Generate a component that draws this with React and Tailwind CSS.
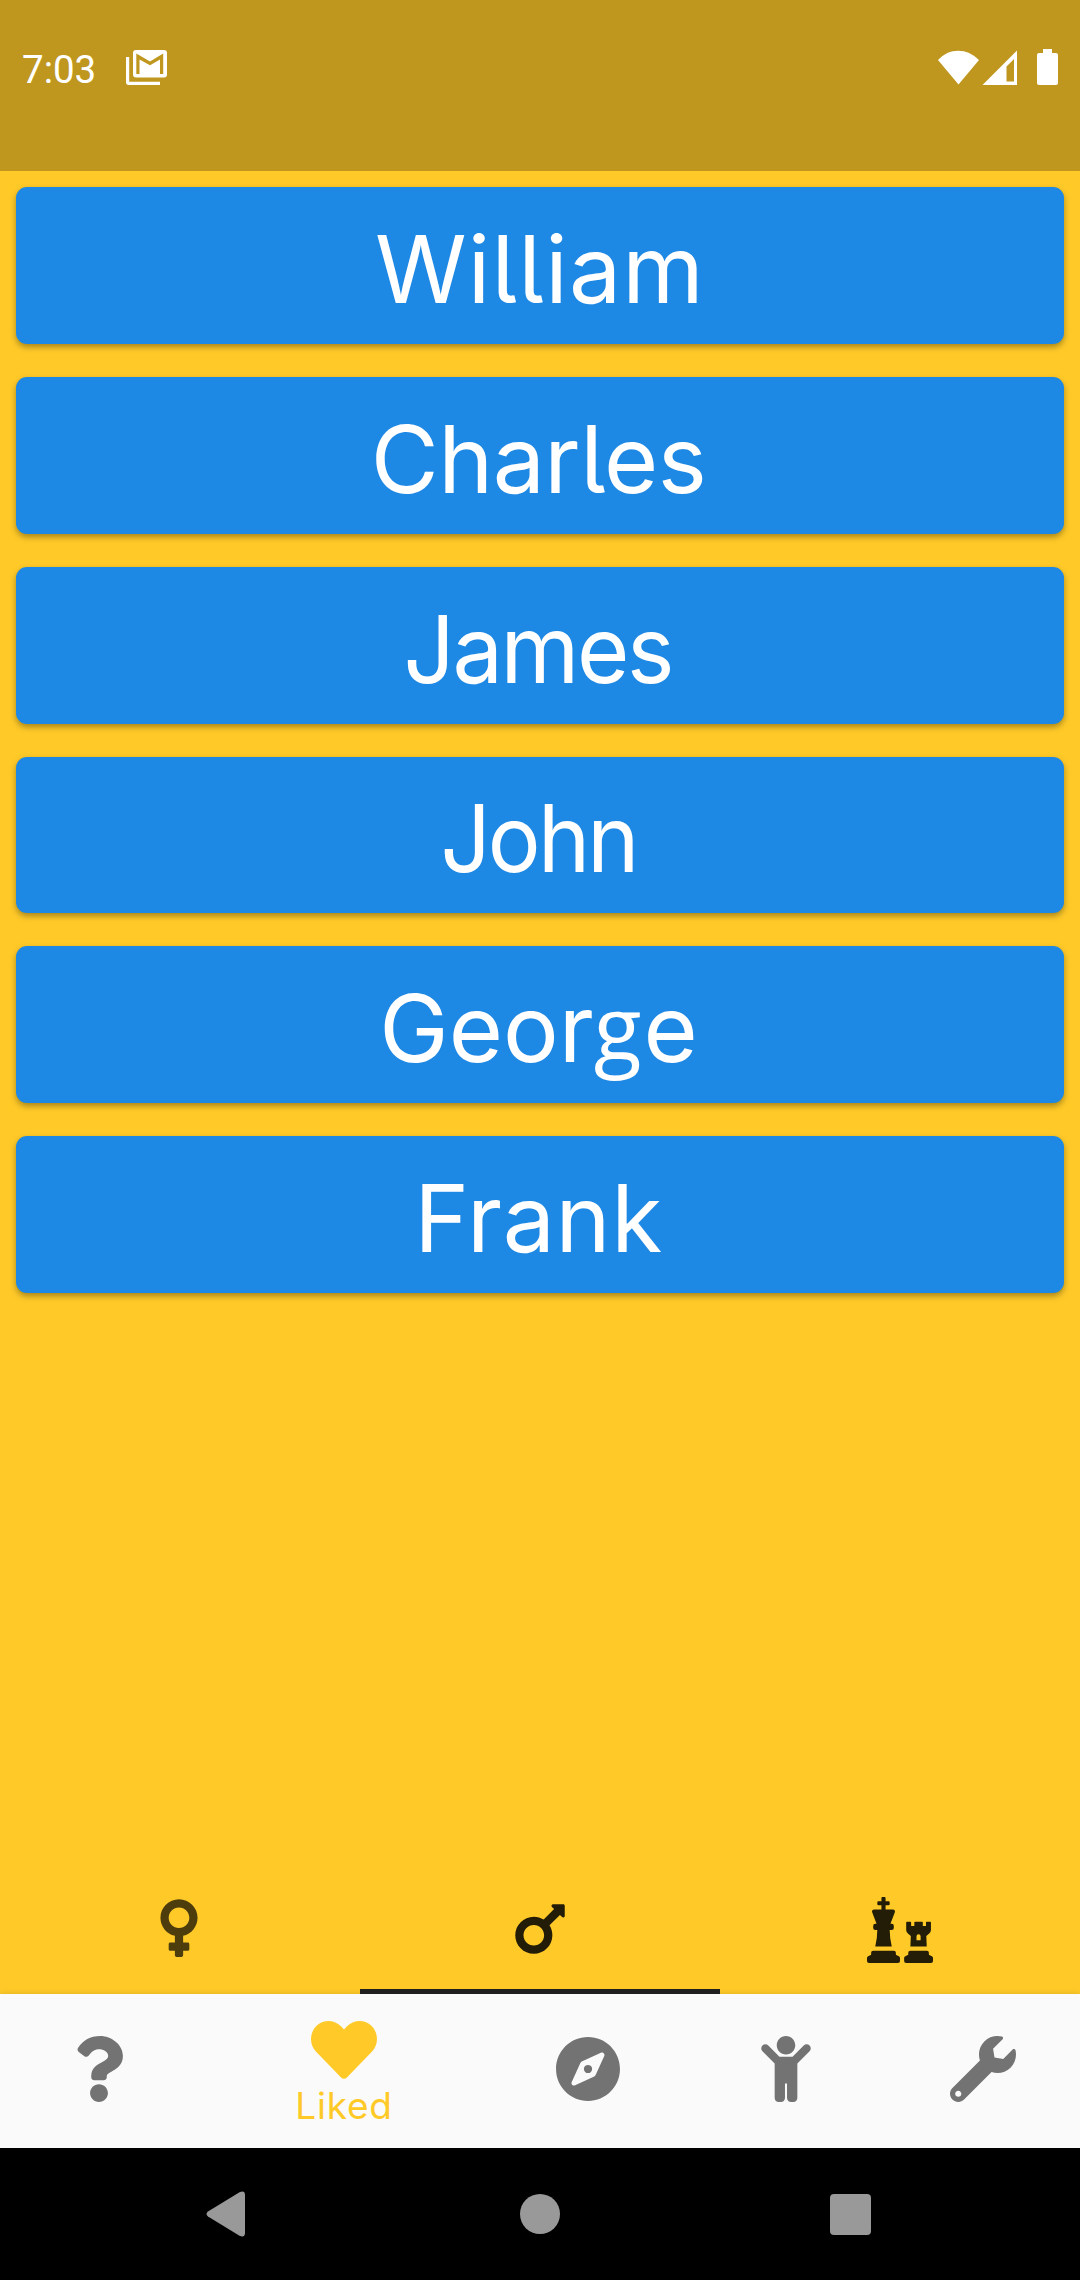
import { FaVenus, FaMars, FaChess, FaQuestion, FaHeart, FaCompass, FaChild, FaWrench } from "react-icons/fa";

const names = [
  { text: "William", cls: "tracking-[1.2px]" },
  { text: "Charles", cls: "tracking-[-0.53px] mr-[3px]" },
  { text: "James", cls: "tracking-[-2.5px] mr-[4px] scale-x-[0.967]" },
  { text: "John", cls: "tracking-[-3px] mr-[4px] scale-x-[0.948]" },
  {
    text: (
      <>
        Geor<span className="align-[2px] font-['Open_Sans',sans-serif] text-[88px] leading-[0] tracking-[2px]">g</span>e
      </>
    ),
    cls: "mr-[3px]",
  },
  { text: "Frank", cls: "tracking-[0.65px] mr-[3px]" },
];

export default function App() {
  return (
    <div className="flex h-[2280px] w-[1080px] flex-col bg-[#ffca28] font-['Inter',sans-serif]">
      <header className="flex h-[171px] items-start justify-between bg-[#bf971e] pl-[22px] pr-[22px] pt-[46px] text-white">
        <div className="flex items-start">
          <span className="mt-px font-['Roboto',sans-serif] text-[38.5px] leading-[46px]">7:03</span>
          <svg className="ml-[30px] mt-1 h-[35px] w-[41px]" viewBox="0 0 41 35" fill="none">
            <path d="M1.500 7v24.500a2 2 0 0 0 2 2H34" stroke="white" strokeWidth="3.4" />
            <path fillRule="evenodd" fill="white" d="M10 0h28a3 3 0 0 1 3 3v21.500a3 3 0 0 1-3 3H10a3 3 0 0 1-3-3V3a3 3 0 0 1 3-3Z M10.300 3.500V24h3.200V9.500L24 15.300L34 9.500V24h3.200V3.500L24 11.500Z" />
          </svg>
        </div>
        <svg className="mt-[3px] h-[36px] w-[121px]" viewBox="0 0 121 36" fill="white">
          <path d="M1 11C12 -1.500 30 -1.500 42 11L21.500 35.500Z" />
          <path fillRule="evenodd" d="M80 1.500V36H45.500Z M77 10L69.500 17.500V32.500H77Z" />
          <path d="M106 0h9v4h4a2 2 0 0 1 2 2v28a2 2 0 0 1-2 2h-17a2 2 0 0 1-2-2V6a2 2 0 0 1 2-2h4Z" />
        </svg>
      </header>
      <main className="flex flex-1 flex-col gap-[33px] px-4 pt-[16.25px]">
        {names.map((n, i) => (
          <div
            key={i}
            className="flex h-[156.75px] shrink-0 items-center justify-center rounded-[11px] bg-[#1e88e5] pt-[8px] text-white shadow-[0_3px_6px_rgba(0,0,0,0.35)]"
          >
            <span className={`block h-[93px] text-[93px] leading-none [font-feature-settings:'cv05'] ${n.cls}`}>{n.text}</span>
          </div>
        ))}
      </main>
      <nav className="grid h-[128px] shrink-0 grid-cols-3 text-[66px] text-[#231c06]">
        <div className="flex justify-center pr-[2px] pt-[29px] text-[#4d3d0c]"><FaVenus /></div>
        <div className="flex justify-center border-b-[5px] border-[#212121] pt-[30px]"><FaMars /></div>
        <div className="flex justify-center pt-[31px]"><FaChess /></div>
      </nav>
      <nav className="flex h-[154px] shrink-0 bg-[#fafafa] text-[66px] text-[#737373] shadow-[0_0_6px_rgba(0,0,0,0.15)]">
        <div className="flex w-[198px] items-center justify-center pb-[4px]"><FaQuestion /></div>
        <div className="flex w-[292px] flex-col items-center pt-[23px] text-[#ffca28]">
          <FaHeart />
          <span className="mt-px text-[37px] leading-[44px] tracking-[0.8px]">Liked</span>
        </div>
        <div className="flex w-[196px] items-center justify-center pb-[4px]"><FaCompass /></div>
        <div className="flex w-[199px] items-center justify-center pb-[4px]"><FaChild /></div>
        <div className="flex w-[195px] items-center justify-center pb-[4px]"><FaWrench /></div>
      </nav>
      <footer className="flex h-[132px] shrink-0 items-center bg-black pl-[206px] text-[#999999]">
        <svg className="h-[46px] w-[39px]" viewBox="0 0 39 46" fill="currentColor">
          <path d="M2 20.500L33.500 1.200Q39 -1 39 4V42Q39 47 33.500 44.800L2 25.500Q-1 23 2 20.500Z" />
        </svg>
        <div className="ml-[275px] size-10 rounded-full bg-[#999999]" />
        <div className="ml-[270px] size-[41px] rounded-[4px] bg-[#999999]" />
      </footer>
    </div>
  );
}
